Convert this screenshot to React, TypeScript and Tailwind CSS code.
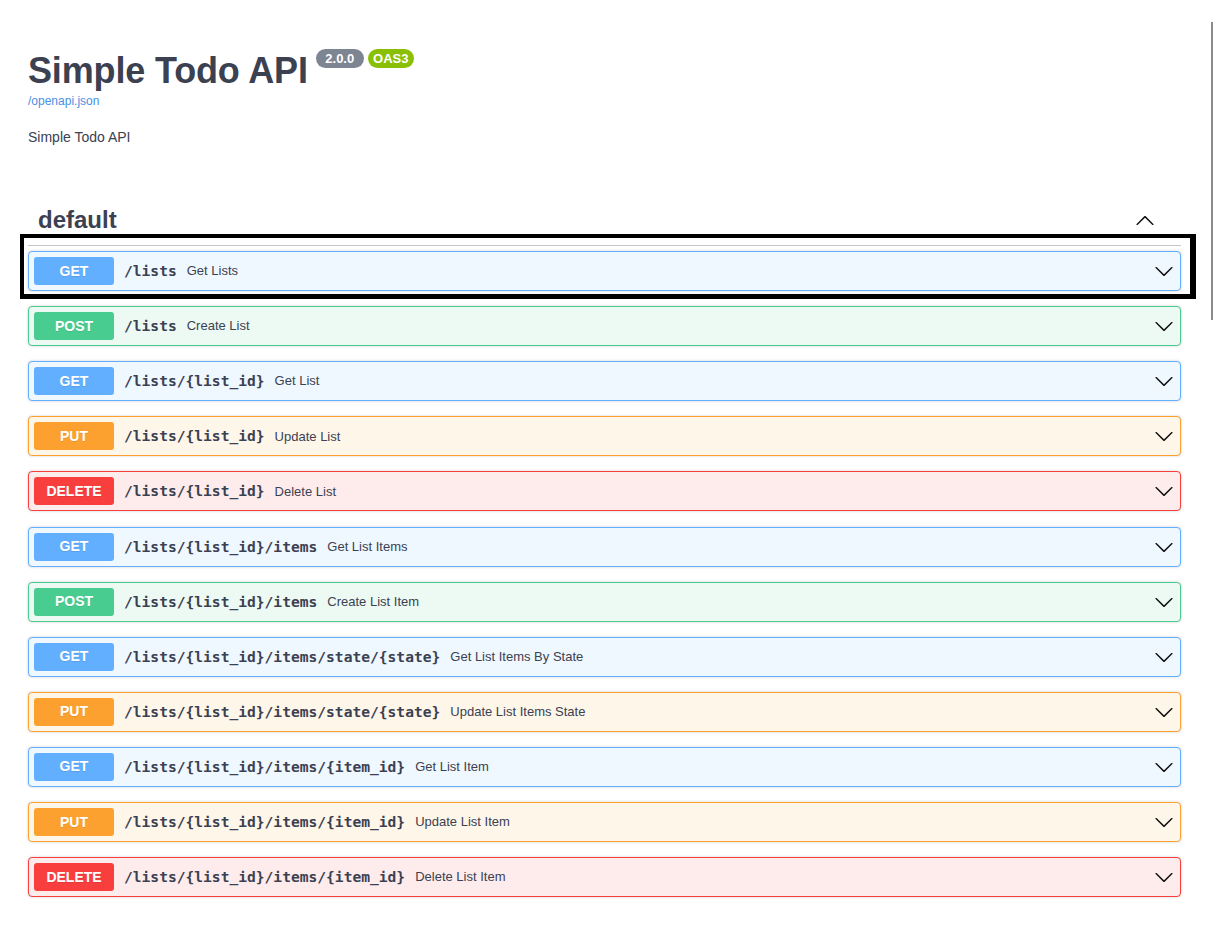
import React from 'react';

type Method = 'GET' | 'POST' | 'PUT' | 'DELETE';

const styles: Record<Method, { row: string; badge: string }> = {
  GET: { row: 'bg-[#eff7ff] border-[#61affe]', badge: 'bg-[#61affe]' },
  POST: { row: 'bg-[#edfaf4] border-[#49cc90]', badge: 'bg-[#49cc90]' },
  PUT: { row: 'bg-[#fff6ea] border-[#fca130]', badge: 'bg-[#fca130]' },
  DELETE: { row: 'bg-[#feecec] border-[#f93e3e]', badge: 'bg-[#f93e3e]' },
};

const endpoints: { method: Method; path: string; summary: string }[] = [
  { method: 'GET', path: '/lists', summary: 'Get Lists' },
  { method: 'POST', path: '/lists', summary: 'Create List' },
  { method: 'GET', path: '/lists/{list_id}', summary: 'Get List' },
  { method: 'PUT', path: '/lists/{list_id}', summary: 'Update List' },
  { method: 'DELETE', path: '/lists/{list_id}', summary: 'Delete List' },
  { method: 'GET', path: '/lists/{list_id}/items', summary: 'Get List Items' },
  { method: 'POST', path: '/lists/{list_id}/items', summary: 'Create List Item' },
  { method: 'GET', path: '/lists/{list_id}/items/state/{state}', summary: 'Get List Items By State' },
  { method: 'PUT', path: '/lists/{list_id}/items/state/{state}', summary: 'Update List Items State' },
  { method: 'GET', path: '/lists/{list_id}/items/{item_id}', summary: 'Get List Item' },
  { method: 'PUT', path: '/lists/{list_id}/items/{item_id}', summary: 'Update List Item' },
  { method: 'DELETE', path: '/lists/{list_id}/items/{item_id}', summary: 'Delete List Item' },
];

function Arrow({ up = false }: { up?: boolean }) {
  return (
    <svg width="20" height="20" viewBox="0 0 20 20" className="shrink-0" fill="#111">
      {up ? (
        <path d="M17.418 14.908c.272.268.709.268.979 0s.271-.701 0-.969l-7.908-7.83c-.27-.268-.707-.268-.979 0l-7.908 7.83c-.27.268-.27.701 0 .969.271.268.709.268.979 0L10 7.767l7.418 7.141z" />
      ) : (
        <path d="M17.418 6.109c.272-.268.709-.268.979 0s.271.701 0 .969l-7.908 7.83c-.27.268-.707.268-.979 0l-7.908-7.830c-.27-.268-.27-.701 0-.969.271-.268.709-.268.979 0L10 13.25l7.418-7.141z" />
      )}
    </svg>
  );
}

function Operation({ method, path, summary }: { method: Method; path: string; summary: string }) {
  const s = styles[method];
  return (
    <div className={`flex items-center h-[40px] p-[5px] border rounded-[4px] shadow-[0_0_3px_rgba(0,0,0,0.19)] ${s.row}`}>
      <div
        className={`w-[80px] h-[28px] rounded-[3px] flex items-center justify-center text-white text-[14px] font-bold [text-shadow:0_1px_0_rgba(0,0,0,0.1)] ${s.badge}`}
      >
        {method}
      </div>
      <span className="px-[10px] font-['DejaVu_Sans_Mono',monospace] font-bold text-[14.6px] text-[#3b4151]">
        {path}
      </span>
      <span className="flex-1 text-[13px] text-[#3b4151]">{summary}</span>
      <div className="pr-[1px]">
        <Arrow />
      </div>
    </div>
  );
}

export default function App() {
  return (
    <div className="relative min-h-[936px] bg-white pl-[28px] pr-[33px] pt-[53px] pb-[40px] font-['Liberation_Sans',Arial,sans-serif] text-[#3b4151]">
      {/* info */}
      <div className="flex items-start">
        <h2 className="text-[36px] leading-[36px] font-bold tracking-[-0.15px]">Simple Todo API</h2>
        <span className="ml-[8px] -mt-[4px] w-[48px] h-[19px] rounded-full bg-[#7d8492] text-white text-[13px] font-bold leading-[19px] text-center">
          2.0.0
        </span>
        <span className="ml-[4px] -mt-[4px] w-[46px] h-[19px] rounded-full bg-[#89bf04] text-white text-[13px] font-bold leading-[19px] text-center">
          OAS3
        </span>
      </div>
      <div className="mt-[5px] text-[12px] leading-[14px] text-[#4990e2]">/openapi.json</div>
      <p className="mt-[19px] text-[14px] leading-[20px]">Simple Todo API</p>

      {/* tag */}
      <div className="mt-[49px] flex items-center justify-between pt-[10px] pb-[11px] pl-[10px] pr-[26px] border-b border-[#c4c5cb]">
        <h3 className="text-[24px] leading-[28px] font-bold">default</h3>
        <Arrow up />
      </div>

      <div className="mt-[5px] flex flex-col gap-[15.12px]">
        {endpoints.map((e, i) => (
          <div key={i} className="relative">
            {i === 0 && (
              <div className="absolute left-[-8px] top-[-17px] right-[-15px] bottom-[-8px] border-black border-l-4 border-t-4 border-r-[6px] border-b-[5px] pointer-events-none" />
            )}
            <Operation {...e} />
          </div>
        ))}
      </div>

      {/* scrollbar thumb */}
      <div className="fixed right-[1px] top-[22px] h-[298px] w-[2px] bg-[#8a8a8a]" />
    </div>
  );
}
